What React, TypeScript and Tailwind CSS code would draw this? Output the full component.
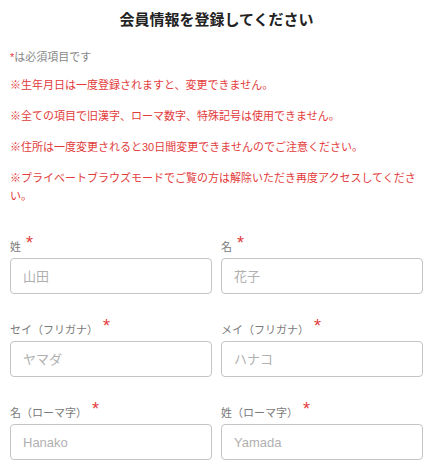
import { useState } from "react";

interface Field {
  key: string;
  label: string;
  placeholder: string;
}

const notes = [
  "※生年月日は一度登録されますと、変更できません。",
  "※全ての項目で旧漢字、ローマ数字、特殊記号は使用できません。",
  "※住所は一度変更されると30日間変更できませんのでご注意ください。",
  "※プライベートブラウズモードでご覧の方は解除いただき再度アクセスしてください。",
];

const fields: Field[] = [
  { key: "sei", label: "姓", placeholder: "山田" },
  { key: "mei", label: "名", placeholder: "花子" },
  { key: "seiKana", label: "セイ（フリガナ）", placeholder: "ヤマダ" },
  { key: "meiKana", label: "メイ（フリガナ）", placeholder: "ハナコ" },
  { key: "meiRoma", label: "名（ローマ字）", placeholder: "Hanako" },
  { key: "seiRoma", label: "姓（ローマ字）", placeholder: "Yamada" },
];

function FormField({
  field,
  value,
  onChange,
}: {
  field: Field;
  value: string;
  onChange: (v: string) => void;
}) {
  return (
    <div>
      <label className="mb-[6px] block h-[18px] text-[11px] leading-[18px] text-[#7a7a7a]">
        {field.label}
        <span className="ml-[5px] align-[2px] text-[18px] leading-none text-[#e23b3b]">*</span>
      </label>
      <input
        type="text"
        value={value}
        onChange={(e) => onChange(e.target.value)}
        placeholder={field.placeholder}
        className="block h-[36px] w-full rounded-[4px] border border-[#c4c4c4] bg-white px-[12px] text-[13px] text-[#333] placeholder-[#b0b0b0] outline-none"
      />
    </div>
  );
}

export default function App() {
  const [values, setValues] = useState<Record<string, string>>({});

  return (
    <div
      className="min-h-[464px] bg-white px-[10px] pt-[10px]"
      style={{ fontFamily: '"Liberation Sans", "Noto Sans CJK JP", sans-serif' }}
    >
      <h1 className="text-center text-[15px] font-bold leading-[20px] text-[#222]">
        会員情報を登録してください
      </h1>

      <p className="mt-[18px] text-[11px] leading-[18px] text-[#888]">
        <span className="text-[#e23b3b]">*</span>は必須項目です
      </p>

      <div className="mt-[10px] space-y-[13px]">
        {notes.map((note) => (
          <p key={note} className="text-[11px] leading-[18px] text-[#e23b3b]">
            {note}
          </p>
        ))}
      </div>

      <div className="mt-[29px] grid grid-cols-2 gap-x-[9px] gap-y-[23px]">
        {fields.map((field) => (
          <FormField
            key={field.key}
            field={field}
            value={values[field.key] ?? ""}
            onChange={(v) => setValues((prev) => ({ ...prev, [field.key]: v }))}
          />
        ))}
      </div>
    </div>
  );
}
